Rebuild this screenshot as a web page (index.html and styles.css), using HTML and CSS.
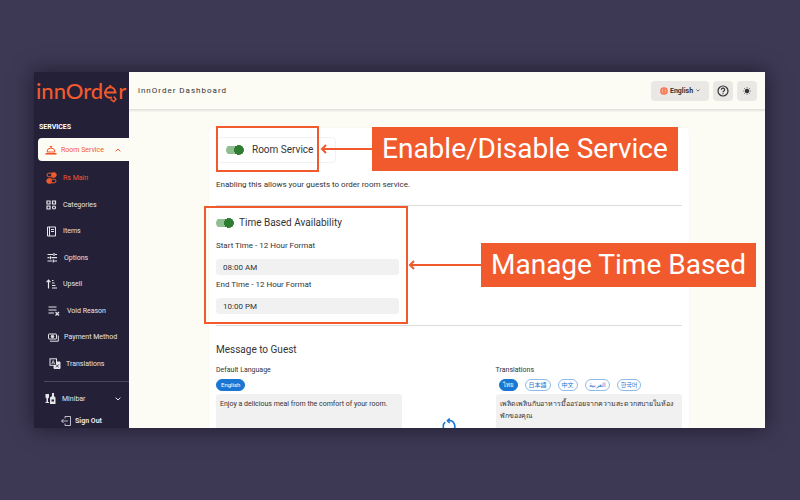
FILE: index.html
```html
<!DOCTYPE html>
<html lang="en">
<head>
<meta charset="utf-8">
<meta name="viewport" content="width=device-width, initial-scale=1">
<title>innOrder Dashboard</title>
<link rel="stylesheet" href="styles.css">
</head>
<body>
<div class="window">
  <aside class="sidebar">
    <a class="logo" href="#" aria-label="innOrder"><span>innOrd</span><svg width="15" height="24" viewBox="0 0 15 24" fill="none" stroke="currentColor" stroke-width="2"><path d="M1 13.500h12.500M2.500 13a4.800 4.800 0 0 1 9.600 0M2 14a5.200 5.200 0 0 0 7 4.500M7.300 8V6"/><path d="M10.800 17.500l2.200 2.800-2.200 2.500-2-1.800H7.500" stroke-width="1.500"/></svg><span>r</span></a>
    <h2 class="nav-title">SERVICES</h2>
    <nav class="nav">
      <a class="nav-parent" href="#">
        <svg width="12" height="10" viewBox="0 0 12 10" fill="none" stroke="currentColor"><path d="M2 7a4 4 0 0 1 8 0zM6 3V1.500M4.800 1.500h2.400"/><path d="M.5 8.800h11" stroke-width="1.600"/></svg>
        <span>Room Service</span>
        <svg class="chevron" width="6" height="4" viewBox="0 0 6 4" fill="none" stroke="currentColor"><path d="M.6 3.400 3 1l2.400 2.400"/></svg>
      </a>
      <ul class="nav-list">
        <li><a class="current" href="#"><svg width="11" height="12" viewBox="0 0 11 12" fill="none" stroke="currentColor"><rect x="1" y="1.200" width="9" height="3.600" rx="1.800"/><circle cx="7.800" cy="3" r="2.700" fill="currentColor" stroke="none"/><rect x="1" y="7.200" width="9" height="3.600" rx="1.800"/><circle cx="3.200" cy="9" r="2.700" fill="currentColor" stroke="none"/></svg>Rs Main</a></li>
        <li><a href="#"><svg width="11" height="10" viewBox="0 0 11 10" fill="none" stroke="currentColor" stroke-width="1.200"><path d="M1 1h3v3H1zM6.500 1h3v3h-3zM1 6h3v3H1z"/><circle cx="8" cy="7.500" r="1.500"/></svg>Categories</a></li>
        <li><a href="#"><svg width="11" height="11" viewBox="0 0 11 11" fill="none" stroke="currentColor"><path d="M1.500 1h8v9h-8zM3.500 1v9M5 3.500h3M5 5.500h3"/></svg>Items</a></li>
        <li><a href="#"><svg width="12" height="10" viewBox="0 0 12 10" fill="none" stroke="currentColor" stroke-width="1.200"><path d="M1.500 1.500H7M9 1.500h2M8 0v3M1.500 4.700h2M5.500 4.700H11M4.500 3.200v3M1.500 8H6M8 8h3M7.300 6.500v3"/></svg>Options</a></li>
        <li><a href="#"><svg width="11" height="10" viewBox="0 0 11 10" fill="none" stroke="currentColor" stroke-width="1.200"><path d="M2.500 9.500v-8M.6 3.200l1.900-2 1.900 2M6 1.500h1.500M6 4h2.500M6 6.500h3.500M6 9h5"/></svg>Upsell</a></li>
        <li class="inset"><a href="#"><svg width="14" height="10" viewBox="0 0 14 10" fill="none" stroke="currentColor" stroke-width="1.200"><path d="M.5 1h8M.5 4h8M.5 7H6M7.500 6l3.500 3.500M11 6 7.500 9.500"/></svg>Void Reason</a></li>
        <li class="inset"><a href="#"><svg width="11" height="9" viewBox="0 0 11 9" fill="none" stroke="currentColor"><rect x=".5" y="1" width="8" height="5" rx=".5"/><circle cx="4.500" cy="3.500" r="1.300" fill="currentColor"/><path d="M10.300 2.500v5.700H2"/></svg>Payment Method</a></li>
        <li class="inset"><a href="#"><svg width="13" height="11" viewBox="0 0 13 11" fill="none" stroke="currentColor"><rect x="2" y=".8" width="6.500" height="6.500"/><path d="M3.800 6 5.200 2.500 6.700 6M4.300 5h2" stroke-width=".7"/><path d="M8.500 4H12v6.500H6V7.500h2.500z" fill="currentColor"/><path d="M8 9.300l3-3M8.300 7l2.400 2.300" stroke="#232038" stroke-width=".8"/></svg>Translations</a></li>
      </ul>
      <a class="nav-group" href="#">
        <svg width="11" height="11" viewBox="0 0 11 11" fill="currentColor"><path d="M.5 1h3.500v3.500L3 5.500V9h1v1H.5V9h1V5.500l-1-1zM7 0h2v3l1.500 1.500V11H5V4.500L7 3z"/><path d="M6.500 6.500h2.500v2H6.500z" fill="#232038"/></svg>
        <span>Minibar</span>
        <svg class="chevron" width="6" height="4" viewBox="0 0 6 4" fill="none" stroke="currentColor"><path d="M.6.6 3 3 5.400.6"/></svg>
      </a>
    </nav>
    <button class="sign-out" type="button"><svg width="10" height="10" viewBox="0 0 10 10" fill="none" stroke="currentColor" stroke-width=".8"><path d="M4 2.500V.5h5.500v9H4v-2M7 5H.6M2.500 3 .6 5l1.900 2"/></svg>Sign Out</button>
  </aside>

  <div class="page">
    <header class="topbar">
      <h1>innOrder Dashboard</h1>
      <div class="tools">
        <label class="language">
          <svg width="8" height="8" viewBox="0 0 8 8" fill="none" stroke="#fbc3b2" stroke-width=".6"><circle cx="4" cy="4" r="3.800" fill="#f4623a" stroke="none"/><ellipse cx="4" cy="4" rx="1.600" ry="3.500"/><path d="M.5 3h7M.5 5h7"/></svg>
          <select aria-label="Language"><option>English</option></select>
          <svg width="4" height="3" viewBox="0 0 4 3" fill="none" stroke="currentColor" stroke-width=".7"><path d="m.4.5 1.600 1.600L3.600.5"/></svg>
        </label>
        <button type="button" aria-label="Help"><svg width="12" height="12" viewBox="0 0 12 12" fill="none" stroke="currentColor" stroke-width="1.200"><circle cx="6" cy="6" r="5"/><path d="M4.400 4.800a1.600 1.600 0 1 1 2.400 1.300q-.8.400-.8 1.100M6 8.200v1"/></svg></button>
        <button type="button" aria-label="Theme"><svg width="8" height="8" viewBox="0 0 8 8" fill="none" stroke="currentColor" stroke-width=".8"><circle cx="4" cy="4" r="2.200" fill="currentColor" stroke="none"/><path d="M4 .3v1M4 6.700v1M.3 4h1M6.700 4h1M1.300 1.300l.8.800M5.900 5.900l.8.800M1.300 6.700l.8-.8M5.900 2.100l.8-.8"/></svg></button>
      </div>
    </header>

    <main class="card">
      <section class="service">
        <label class="toggle boxed"><input type="checkbox" role="switch" checked>Room Service</label>
        <p>Enabling this allows your guests to order room service.</p>
      </section>
      <section class="availability">
        <label class="toggle"><input type="checkbox" role="switch" checked>Time Based Availability</label>
        <label class="field">Start Time - 12 Hour Format<input type="text" value="08:00 AM"></label>
        <label class="field">End Time - 12 Hour Format<input type="text" value="10:00 PM"></label>
      </section>
      <section class="message">
        <h2>Message to Guest</h2>
        <div class="columns">
          <div class="column">
            <label for="default-text">Default Language</label>
            <div class="chips"><button class="selected" type="button">English</button></div>
            <textarea id="default-text">Enjoy a delicious meal from the comfort of your room.</textarea>
          </div>
          <button class="sync" type="button" aria-label="Translate again"><svg width="14" height="16" viewBox="0 0 14 16" fill="none" stroke="currentColor" stroke-width="1.600"><path d="M3.200 4.200A5.600 5.600 0 0 0 4.500 13.500M6 2.700A5.600 5.600 0 0 1 10 13M7.700.5l-2.300 2.200 2.300 2.200"/></svg></button>
          <div class="column">
            <label for="translated-text">Translations</label>
            <div class="chips spaced">
              <button class="selected" type="button" lang="th">ไทย</button>
              <button type="button" lang="ja">日本語</button>
              <button type="button" lang="zh">中文</button>
              <button type="button" lang="ar">العربية</button>
              <button type="button" lang="ko">한국어</button>
            </div>
            <textarea id="translated-text" lang="th">เพลิดเพลินกับอาหารมื้ออร่อยจากความสะดวกสบายในห้องพักของคุณ</textarea>
          </div>
        </div>
      </section>
    </main>
  </div>

  <div class="outline outline-service"></div>
  <div class="outline outline-time"></div>
  <div class="callout callout-service">
    <svg viewBox="0 0 52 10" width="52" height="10" fill="none" stroke="currentColor" stroke-width="2"><path d="M52 5H2M6 1 2 5l4 4"/></svg>
    <strong>Enable/Disable Service</strong>
  </div>
  <div class="callout callout-time">
    <svg viewBox="0 0 73 10" width="73" height="10" fill="none" stroke="currentColor" stroke-width="2"><path d="M73 5H2M6 1 2 5l4 4"/></svg>
    <strong>Manage Time Based</strong>
  </div>
</div>
</body>
</html>
```
FILE: styles.css
```css
:root {
  --orange: #f15a2d;
  --navy: #232038;
  --cream: #fcfbf4;
  --blue: #1976d2;
  --grey: #f1f1f1;
  --text: #333336;
}
* { box-sizing: border-box; }
body {
  margin: 0;
  padding: 72px 35px 72px 34px;
  background: #3d3854;
  color: var(--text);
  font: 8px/12px Roboto, "Noto Sans", "Noto Sans CJK JP", sans-serif;
}
h1, h2, p, ul { margin: 0; padding: 0; }
a { color: inherit; text-decoration: none; }
button, input, select, textarea { font: inherit; color: inherit; border: 0; padding: 0; margin: 0; background: none; }
svg { display: block; flex: none; }

.window {
  position: relative;
  display: flex;
  height: calc(100vh - 144px);
  background: var(--cream);
  box-shadow: 0 0 20px rgba(10, 8, 20, .6);
}

/* Sidebar */
.sidebar {
  flex: none;
  width: 95px;
  display: flex;
  flex-direction: column;
  background: var(--navy);
  color: #e6e5ea;
  font-size: 7px;
}
.logo {
  display: flex;
  align-items: center;
  height: 38px;
  padding-left: 2px;
  color: var(--orange);
  font: 500 22px/38px Lato, sans-serif;
}
.nav-title { padding: 11px 0 5px 5px; font-size: 7px; line-height: 12px; color: #fff; }
.nav-parent {
  display: flex;
  align-items: center;
  gap: 4px;
  height: 23px;
  margin-left: 4px;
  padding: 0 8px 0 7px;
  border-radius: 4px 0 0 4px;
  background: var(--cream);
  color: var(--orange);
}
.chevron { margin-left: auto; }
.nav-list { display: grid; grid-auto-rows: 1fr; height: 212px; margin-top: 4px; list-style: none; }
.nav-list li { display: flex; align-items: center; padding-left: 12px; }
.nav-list .inset { padding-left: 14px; }
.nav-list a { display: flex; align-items: center; gap: 6px; white-space: nowrap; }
.nav-list .inset a { gap: 5px; }
.nav-list .current { color: var(--orange); }
.nav-group {
  display: flex;
  align-items: center;
  gap: 6px;
  height: 34px;
  margin: 4px 0 0 10px;
  padding: 0 8px 0 1px;
  border-top: 1px solid #4b485e;
}
.sign-out {
  display: flex;
  align-items: center;
  gap: 4px;
  margin-left: 27px;
  font-weight: 700;
}

/* Header */
.page { flex: 1; min-width: 0; overflow: hidden; }
.topbar {
  display: flex;
  align-items: center;
  justify-content: space-between;
  height: 38px;
  padding: 0 8px 0 9px;
  border-bottom: 1px solid #e4e3de;
  box-shadow: 0 1px 2px rgba(0, 0, 0, .1);
}
.topbar h1 { font-size: 8px; font-weight: 400; letter-spacing: 1px; }
.tools { display: flex; gap: 4px; }
.tools button, .language {
  display: flex;
  align-items: center;
  justify-content: center;
  min-width: 20px;
  height: 20px;
  border-radius: 4px;
  background: #e9e8e4;
}
.language { gap: 2px; padding: 0 9px; font-size: 7px; font-weight: 700; }
.language select { appearance: none; }

/* Settings card */
.card {
  height: 400px;
  margin: 18px 76px 0 80px;
  padding: 9px 7px 0;
  border-radius: 4px;
  background: #fff;
  box-shadow: 0 0 2px rgba(0, 0, 0, .05);
}
.service, .availability { border-bottom: 1px solid #dcdcdc; }
.service { height: 69px; }
.service p { margin-top: 16px; }
.toggle { display: flex; align-items: center; gap: 5px; height: 14px; font-size: 10px; }
.toggle input {
  appearance: none;
  width: 18px;
  height: 10px;
  border-radius: 5px;
  background: radial-gradient(circle at 13px 5px, #2e7d32 0 5px, transparent 5px), linear-gradient(#8fbe91, #8fbe91) 0 1px / 16px 8px no-repeat;
}
.boxed {
  width: 120px;
  height: 26px;
  gap: 8px;
  padding-left: 9px;
  border: 1px solid #f2f2f2;
  border-radius: 4px;
}
.availability { height: 120px; padding-top: 10px; }
.availability .toggle { margin-bottom: 10px; }
.field { display: block; width: 183px; margin-top: 4px; }
.field input {
  display: block;
  width: 100%;
  height: 16px;
  margin-top: 7px;
  padding-left: 7px;
  border-radius: 3px;
  background: var(--grey);
}
.message { padding-top: 17px; }
.message h2 { font-size: 10px; font-weight: 400; line-height: 14px; }
.columns { display: grid; grid-template-columns: 2fr 1fr 2fr; margin-top: 7px; }
.column label { display: block; font-size: 7px; }
.chips { display: flex; gap: 7px; margin: 3px 0; }
.spaced { padding-left: 3px; }
.chips button {
  height: 12px;
  padding: 0 4px;
  border: 1px solid #8dbbe9;
  border-radius: 6px;
  color: var(--blue);
  font-size: 6px;
  line-height: 10px;
}
.chips .selected { border-color: var(--blue); background: var(--blue); color: #fff; }
.chips.spaced button { padding: 0 3px; }
textarea {
  display: block;
  width: 100%;
  height: 60px;
  padding: 4px;
  border-radius: 3px;
  background: var(--grey);
  font-size: 7px;
  resize: none;
}
.sync { justify-self: center; align-self: start; margin-top: 54px; color: var(--blue); }

/* Annotations laid over the dashboard */
.outline { position: absolute; border: 2px solid var(--orange); }
.outline-service { left: 182px; top: 54px; width: 103px; height: 46px; }
.outline-time { left: 170px; top: 134px; width: 204px; height: 118px; }
.callout { position: absolute; display: flex; align-items: center; color: var(--orange); }
.callout strong {
  padding: 0 10px;
  background: var(--orange);
  color: #fff;
  font-size: 28px;
  font-weight: 400;
  line-height: 44px;
  white-space: nowrap;
}
.callout-service { left: 286px; top: 55px; }
.callout-time { left: 374px; top: 171px; }
```
